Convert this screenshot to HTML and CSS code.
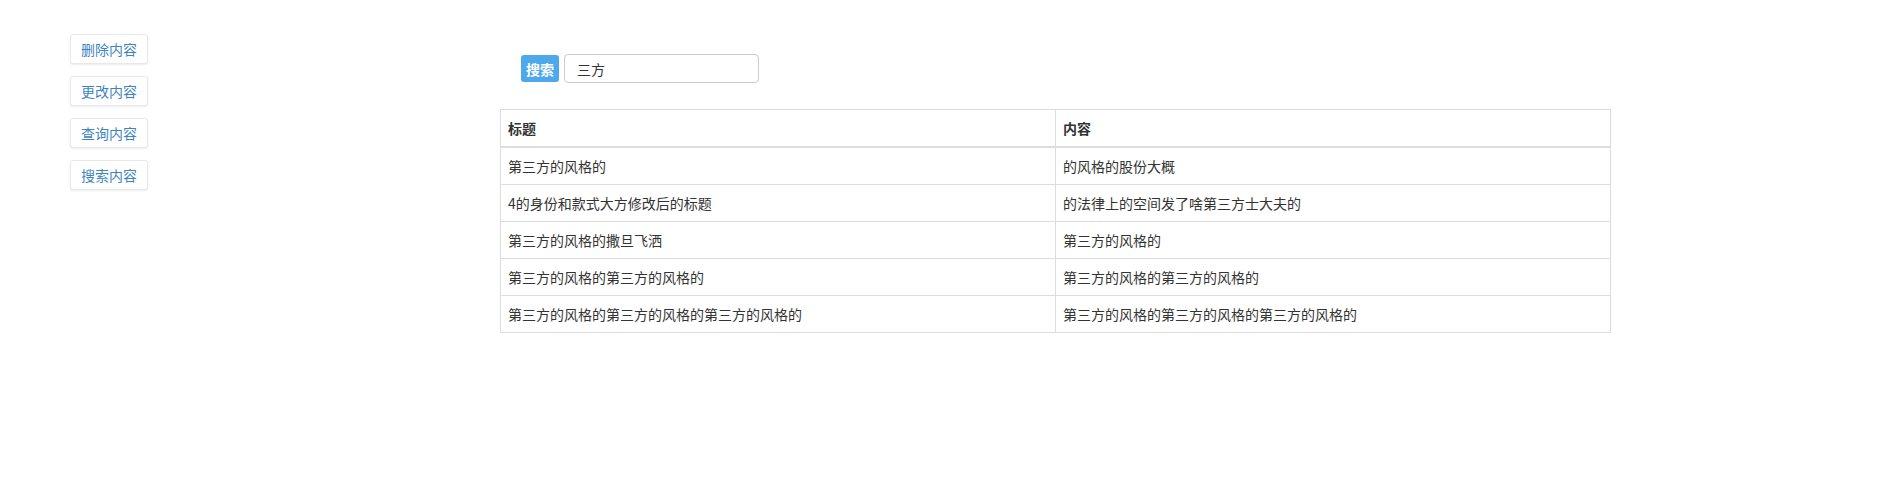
FILE: index.html
```html
<!DOCTYPE html>
<html lang="zh-CN">
    <head>
        <meta charset="UTF-8">
        <title>内容管理</title>
        <link rel="stylesheet" href="styles.css">
    </head>
    <body>
        <div class="page">
            <div class="menu">
                <a class="menu-btn" href="#">删除内容</a>
                <a class="menu-btn" href="#">更改内容</a>
                <a class="menu-btn" href="#">查询内容</a>
                <a class="menu-btn" href="#">搜索内容</a>
            </div>

            <div class="main">
                <form class="search" action="#" method="GET">
                    <span class="search-label">搜索</span>
                    <input type="text" class="search-input" name="keyword" value="三方">
                </form>

                <table class="content-table">
                    <thead>
                        <tr>
                            <th>标题</th>
                            <th>内容</th>
                        </tr>
                    </thead>
                    <tbody>
                        <tr>
                            <td>第三方的风格的</td>
                            <td>的风格的股份大概</td>
                        </tr>
                        <tr>
                            <td>4的身份和款式大方修改后的标题</td>
                            <td>的法律上的空间发了啥第三方士大夫的</td>
                        </tr>
                        <tr>
                            <td>第三方的风格的撒旦飞洒</td>
                            <td>第三方的风格的</td>
                        </tr>
                        <tr>
                            <td>第三方的风格的第三方的风格的</td>
                            <td>第三方的风格的第三方的风格的</td>
                        </tr>
                        <tr>
                            <td>第三方的风格的第三方的风格的第三方的风格的</td>
                            <td>第三方的风格的第三方的风格的第三方的风格的</td>
                        </tr>
                    </tbody>
                </table>
            </div>
        </div>
    </body>
</html>
```

FILE: styles.css
```css
body {
    margin: 0;
    font-family: "Noto Sans CJK SC", "Liberation Sans", sans-serif;
    font-size: 14px;
    line-height: 20px;
    color: #333;
    background-color: #fff;
}
.page {
    display: flex;
}
.menu {
    width: 430px;
    padding: 34px 0 0 70px;
    display: flex;
    flex-direction: column;
    align-items: flex-start;
    gap: 12px;
}
.menu-btn {
    display: block;
    padding: 5px 10px;
    line-height: 18px;
    font-size: 14px;
    color: #3f84bf;
    text-decoration: none;
    background-color: #fff;
    border: 1px solid #e8e8e8;
    border-radius: 3px;
    box-shadow: 0 1px 2px rgba(0, 0, 0, 0.08);
}
.main {
    width: 1111px;
}
.search {
    display: flex;
    align-items: center;
    gap: 5px;
    margin: 54px 0 0 21px;
}
.search-label {
    display: block;
    padding: 4px 5px 3px;
    background-color: #4ea8ec;
    color: #fff;
    font-weight: bold;
    border-radius: 3px;
}
.search-input {
    width: 195px;
    height: 29px;
    box-sizing: border-box;
    padding: 4px 12px;
    font-family: inherit;
    font-size: 14px;
    color: #333;
    border: 1px solid #ccc;
    border-radius: 4px;
}
.content-table {
    width: 100%;
    margin-top: 26px;
    border-collapse: collapse;
    table-layout: fixed;
}
.content-table th,
.content-table td {
    padding: 8px 7px;
    text-align: left;
    border: 1px solid #ddd;
}
.content-table th {
    border-bottom-width: 2px;
}
```
